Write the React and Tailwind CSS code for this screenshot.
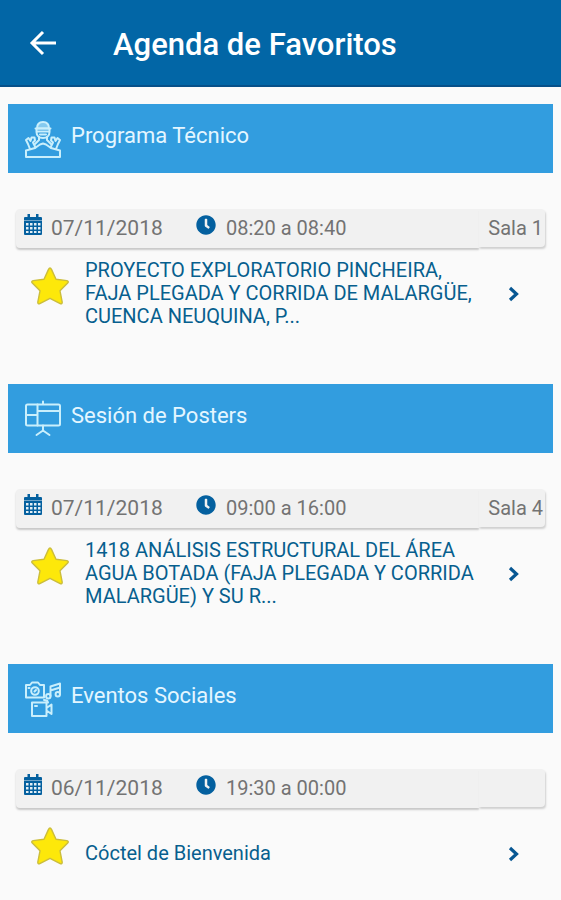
import React from "react";
import { FaClock } from "react-icons/fa";

const iconProps = {
  viewBox: "0 0 40 40",
  fill: "none",
  stroke: "currentColor",
  strokeWidth: 2,
  strokeLinejoin: "round",
  strokeLinecap: "round",
  "aria-hidden": true,
  className: "h-10 w-10 shrink-0 text-[#c9effc]",
};

function SpeakerIcon() {
  return (
    <svg {...iconProps}>
      <path d="M14 9.500c0-4 2.300-6.500 6-6.500s6 2.500 6 6.500z" fill="currentColor" fillOpacity=".55" />
      <path d="M12.500 9.500h15M13.500 10v3c0 3.500 2.500 6 6.500 6s6.500-2.500 6.500-6v-3M14 12.500h12M17 15.500h6" />
      <path d="M16 18v3l-4 4M24 18v3l4 4" />
      <path d="M3 38v-6.500l9-2.500 5-3.500 3-1 3 1 5 3.500 9 2.500V38z" />
      <path d="M7 30l-2-5-2-4 2.500-2 2 3 1-3.500h3l.5 3-2 2 2.500 5M33 30l2-5 2-4-2.500-2-2 3-1-3.500h-3l-.5 3 2 2-2.500 5" />
    </svg>
  );
}

function PosterIcon() {
  return (
    <svg {...iconProps}>
      <rect x="3" y="5.500" width="34" height="21" rx="1.500" />
      <path d="M14.500 5.500v21M3 16h11.500M14.500 12h22M20 5V2.500M20 26.500V32M20 31.500L13.500 36M20 31.500l6.500 4.500" />
    </svg>
  );
}

function SocialIcon() {
  return (
    <svg {...iconProps}>
      <path d="M3 6h4l2-2.500h6L17 6h4v12.500H3z" />
      <circle cx="12" cy="12" r="3.800" />
      <path d="M11.500 12.500l1.500-1.500M5.500 9h1" />
      <path d="M27.500 17V7.500l9.500-3V15M27.500 11.500l9.500-3" />
      <circle cx="25.300" cy="17.200" r="2.200" />
      <circle cx="34.800" cy="15.200" r="2.200" />
      <path d="M9 23.500h14.500V37H9zM23.500 29l5-3.500v9.500l-5-3.500M12 27h2M21 21l3 .5 1 2" />
    </svg>
  );
}

function CalendarIcon() {
  return (
    <svg viewBox="0 0 20 22" className="mb-2 h-[22px] w-5 shrink-0" aria-hidden="true">
      <path d="M2 3h16a1 1 0 0 1 1 1v16a1 1 0 0 1-1 1H2a1 1 0 0 1-1-1V4a1 1 0 0 1 1-1zM4.500 0h2.500v4H4.500zM13 0h2.500v4H13z" fill="#04609f" />
      <path
        d="M3 9h2.500v2.500H3zM7 9h2.500v2.500H7zM11 9h2.500v2.500H11zM15 9h2.500v2.500H15zM3 13h2.500v2.500H3zM7 13h2.500v2.500H7zM11 13h2.500v2.500H11zM15 13h2.500v2.500H15zM3 17h2.500v2H3zM7 17h2.500v2H7zM11 17h2.500v2H11zM15 17h2.500v2H15z"
        fill="#e3eef5"
      />
      <path d="M1 6.500h18" stroke="#8fb8d4" strokeWidth=".8" />
    </svg>
  );
}

function Star() {
  return (
    <svg viewBox="0 0 40 40" className="h-10 w-10" aria-hidden="true">
      <path
        d="M20 2c.8 0 1.200.8 1.600 1.600L26 13.300l10.800 1.300c1.500.2 1.900 1.400.9 2.400L30 24.800l2.200 11.400c.2 1.300-.8 2-2 1.400L20 32.300 9.800 37.600c-1.200.6-2.200-.1-2-1.400L10 24.800 2.300 17c-1-1-.6-2.200.9-2.400L14 13.300l4.400-9.700C18.800 2.800 19.200 2 20 2z"
        fill="#fde80a"
        stroke="#cbbd3c"
        strokeWidth="1.400"
        strokeLinejoin="round"
      />
    </svg>
  );
}

const sections = [
  {
    title: "Programa Técnico",
    Icon: SpeakerIcon,
    date: "07/11/2018",
    time: "08:20 a 08:40",
    room: "Sala 1",
    event:
      "PROYECTO EXPLORATORIO PINCHEIRA, FAJA PLEGADA Y CORRIDA DE MALARGÜE, CUENCA NEUQUINA, P...",
  },
  {
    title: "Sesión de Posters",
    Icon: PosterIcon,
    date: "07/11/2018",
    time: "09:00 a 16:00",
    room: "Sala 4",
    event:
      "1418 ANÁLISIS ESTRUCTURAL DEL ÁREA AGUA BOTADA (FAJA PLEGADA Y CORRIDA MALARGÜE) Y SU R...",
  },
  {
    title: "Eventos Sociales",
    Icon: SocialIcon,
    date: "06/11/2018",
    time: "19:30 a 00:00",
    room: "",
    event: "Cóctel de Bienvenida",
  },
];

function Section({ title, Icon, date, time, room, event }) {
  return (
    <section>
      <h2 className="flex h-[69px] items-center gap-2 bg-[#329ddf] pl-[15px] text-[22px] text-[#e4f6ff]">
        <Icon />
        <span className="pb-1.5">{title}</span>
      </h2>
      <article className="mt-9 min-h-[139px]">
        <div className="mx-2 flex h-[39px] items-start text-[20px] text-[#737373]">
          <div className="flex h-[39px] flex-1 items-center rounded-l-sm bg-[#f1f1f1] pl-[7px] shadow-[0_2px_2px_#c8c8c8]">
            <CalendarIcon />
            <time className="ml-2 w-[145px] text-[21px]">{date}</time>
            <FaClock className="mb-2 h-5 w-5 text-[#04609f]" aria-hidden="true" />
            <span className="ml-2.5 pb-0.5">{time}</span>
          </div>
          <div className="relative flex h-[38px] w-[66px] items-center justify-end rounded-r-sm bg-[#f1f1f1] pr-0.5 shadow-[1px_2px_2px_#d0d0d0]">
            <span className="whitespace-nowrap">{room}</span>
          </div>
        </div>
        <div className="mt-2.5 flex h-[72px] items-center pl-[22px] pr-[33px]">
          <button type="button" aria-label="Quitar de favoritos" className="mb-4 shrink-0">
            <Star />
          </button>
          <a href="#evento" className="ml-[15px] flex flex-1 items-center text-[20px] leading-[23px] text-[#075f8e]">
            <span className="flex-1 pb-0.5 pr-6">{event}</span>
            <svg viewBox="0 0 12 16" className="h-4 w-3 shrink-0" fill="none" stroke="#075793" strokeWidth="3.200" aria-hidden="true">
              <path d="M2 2l6.500 6L2 14" />
            </svg>
          </a>
        </div>
      </article>
    </section>
  );
}

export default function App() {
  return (
    <div className="min-h-screen bg-[#fafafa] font-['Roboto',sans-serif]">
      <header className="flex h-[87px] items-center border-b-2 border-[#075089] bg-[#0266a6] pl-7 text-white">
        <button type="button" aria-label="Volver">
          <svg viewBox="0 0 30 30" className="h-[30px] w-[30px]" fill="none" stroke="currentColor" strokeWidth="3" aria-hidden="true">
            <path d="M28 15H5M15 4L4 15l11 11" />
          </svg>
        </button>
        <h1 className="ml-[55px] pt-1.5 text-[31px] font-medium">Agenda de Favoritos</h1>
      </header>
      <main className="flex flex-col gap-9 px-2 pt-[17px]">
        {sections.map((s) => (
          <Section key={s.title} {...s} />
        ))}
      </main>
    </div>
  );
}
